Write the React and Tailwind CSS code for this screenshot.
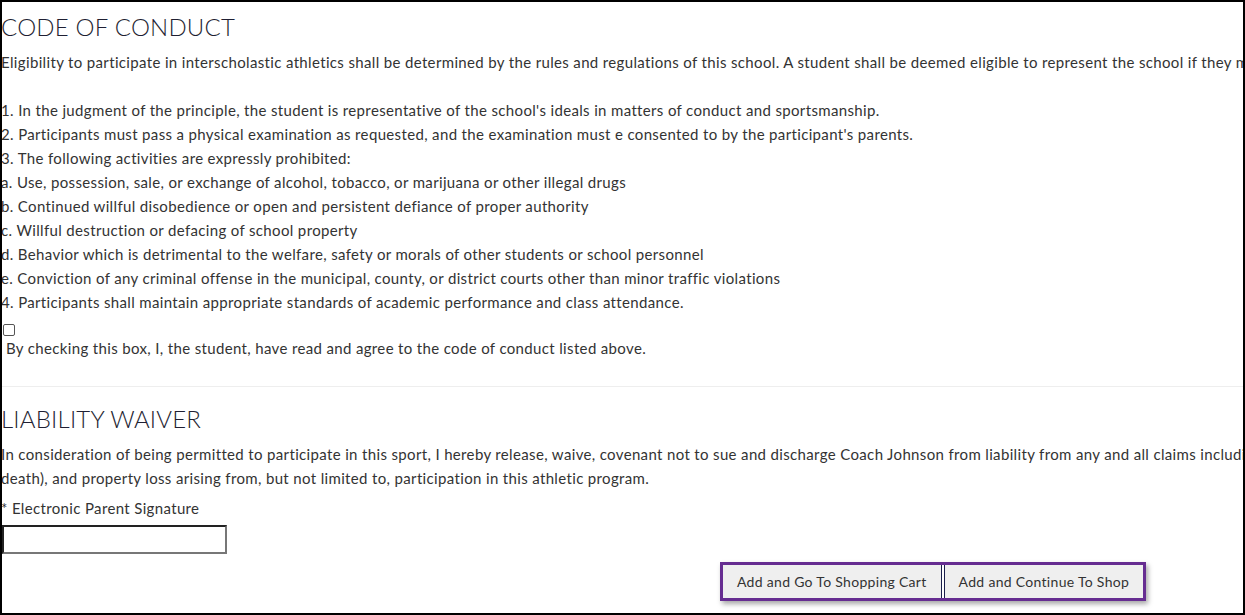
import React from 'react';

const items = [
  "1. In the judgment of the principle, the student is representative of the school's ideals in matters of conduct and sportsmanship.",
  "2. Participants must pass a physical examination as requested, and the examination must e consented to by the participant's parents.",
  "3. The following activities are expressly prohibited:",
  "a. Use, possession, sale, or exchange of alcohol, tobacco, or marijuana or other illegal drugs",
  "b. Continued willful disobedience or open and persistent defiance of proper authority",
  "c. Willful destruction or defacing of school property",
  "d. Behavior which is detrimental to the welfare, safety or morals of other students or school personnel",
  "e. Conviction of any criminal offense in the municipal, county, or district courts other than minor traffic violations",
  "4. Participants shall maintain appropriate standards of academic performance and class attendance.",
];

function App() {
  return (
    <div className="w-[1245px] h-[615px] border-2 border-black overflow-hidden bg-white text-[#333] font-['Lato',sans-serif]">
      <div className="-ml-px">
        <h2 className="pt-[7px] text-[24px] leading-[36px] font-light text-[#1f1f33] tracking-[0.2px]">CODE OF CONDUCT</h2>
        <div className="text-[15px] leading-6 tracking-[0.35px]">
          <p className="whitespace-nowrap mt-[5px]">
            Eligibility to participate in interscholastic athletics shall be determined by the rules and regulations of this school. A student shall be deemed eligible to represent the school if they meet the following requirements:
          </p>
          <div className="h-6"></div>
          {items.map((t) => (
            <p key={t} className="whitespace-nowrap">{t}</p>
          ))}
          <div className="pt-[10px] pl-[2px]">
            <div className="w-[12px] h-[12px] border border-[#555] rounded-[2px] bg-white"></div>
          </div>
          <p className="whitespace-nowrap pl-[5px]">By checking this box, I, the student, have read and agree to the code of conduct listed above.</p>
        </div>
        <div className="mt-[26px] border-t border-[#eee]"></div>
        <h2 className="pt-[14px] text-[24px] leading-[36px] font-light text-[#1f1f33] tracking-[0.2px]">LIABILITY WAIVER</h2>
        <div className="text-[15px] leading-6 mt-[5px] tracking-[0.35px]">
          <p className="whitespace-nowrap">
            In consideration of being permitted to participate in this sport, I hereby release, waive, covenant not to sue and discharge Coach Johnson from liability from any and all claims including injury (including
          </p>
          <p className="whitespace-nowrap">death), and property loss arising from, but not limited to, participation in this athletic program.</p>
          <p className="whitespace-nowrap mt-[6px]">* Electronic Parent Signature</p>
        </div>
        <input
          type="text"
          className="block ml-px mt-[5px] w-[225px] h-[29px] border-2 border-t-[#222] border-l-[#222] border-b-[#777] border-r-[#777] bg-white outline-none"
        />
        <div className="flex mt-[8px] pl-[719px]">
          <div className="flex border-[3px] border-[#662d91] shadow-[2px_3px_5px_rgba(0,0,0,0.35)]">
            <button className="h-[33px] px-[14px] bg-[#efefef] text-[14px] text-[#333] tracking-[0.3px] border-r border-[#1b1f4b]">Add and Go To Shopping Cart</button>
            <div className="w-[2px] bg-white"></div>
            <button className="h-[33px] px-[14px] bg-[#efefef] text-[14px] text-[#333] tracking-[0.3px] border-l border-[#1b1f4b]">Add and Continue To Shop</button>
          </div>
        </div>
      </div>
    </div>
  );
}

export default App;
